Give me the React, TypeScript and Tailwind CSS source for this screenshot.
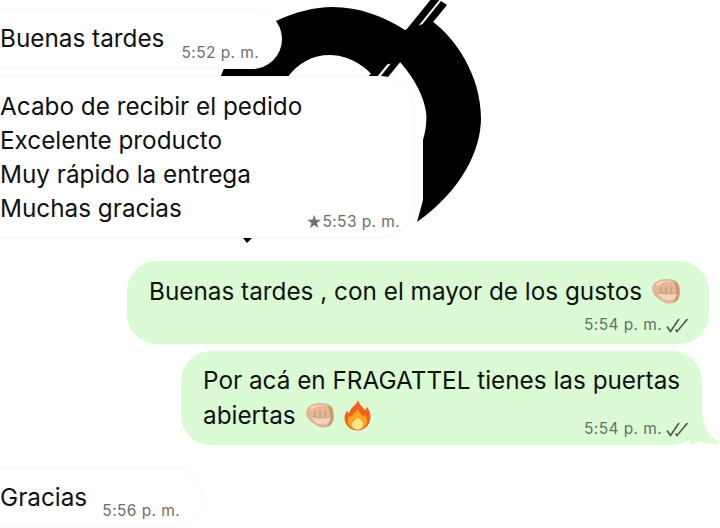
function Fist() {
  return (
    <svg width="30" height="26" viewBox="0 0 30 26" className="inline-block shrink-0">
      <path d="M2.500 6C5 2.500 10 1 16 1c6 0 10 1.500 11.500 4.500 1.500 3 2 9 1 13-1 4-4 6.500-8.500 7-4 .5-7-.5-9-2.500C7 21 2.500 18 1.500 13.500 1 10.500 1 8 2.500 6Z" fill="#e2b896" />
      <path d="M22 3c3.500 1 5.500 3 6 6 .6 4 .5 8-.5 10.500-1 2.500-3 4.500-6 5.300 3-3 4-6.800 3.500-12C24.700 9 24 5.500 22 3Z" fill="#d3966c" />
      <path d="M5 5.500C9 3 15 2.500 21 3.500c-5 0-10 1-13 3.500-2 1.500-3 .5-3-1.500Z" fill="#efd3bb" />
      <path d="M10 9.500v6M15 9v6.500M20 9v6" fill="none" stroke="#c08e6c" strokeWidth="1" strokeLinecap="round" />
      <path d="M7 14.500c5 1.800 12 2 19 .5-.3 3-2 5.500-5 7-4 1-8 .2-10.500-2C9 18.500 7.500 16.500 7 14.500Z" fill="#f0d3ba" />
      <path d="M7 14.500c5 1.800 12 2 19 .5" fill="none" stroke="#c79a78" strokeWidth=".8" />
    </svg>
  );
}

function Flame() {
  return (
    <svg width="27" height="32" viewBox="0 0 27 32" className="inline-block shrink-0">
      <path d="M14 1c1 4 4 6 7 10 1-1 1.500-2 1.500-3.500C25 10 26.500 14 26.500 18c0 8-6 13.500-13 13.500S.5 26 .5 19c0-3 1-5.500 3-7.500 0 1.500.5 2.500 1.500 3C6 9 12 6.500 14 1Z" fill="#f0641e" />
      <path d="M14 10c.5 3 3 5 5 7.500.5-.5 1-1 1-2 2 2 3 4 3 6 0 5-4 9-9.500 9S4 27 4 21.500c0-2 .5-3.500 2-5 0 1 .5 1.500 1 2C8 15 12 13.500 14 10Z" fill="#fba524" />
      <path d="M13.500 19c3 1 5.500 3.500 5.500 6.500 0 3-2.500 5-5.500 5S8 28.500 8 25.500c0-3 3-4 5.500-6.500Z" fill="#fde58a" />
    </svg>
  );
}

function Ticks() {
  return (
    <svg width="23" height="15" viewBox="0 0 23 15" fill="none" stroke="#4f5c4f" strokeWidth="1.700" className="shrink-0">
      <path d="M1 8.500l3.500 5L13 1" />
      <path d="M9.500 11.500l1.500 2L21.500 1" />
    </svg>
  );
}

function Time({ t, className = "text-[#6f6f6f]" }: { t: string; className?: string }) {
  return (
    <span className={`text-[15.500px] leading-5 tracking-[0.4px] whitespace-nowrap ${className}`}>
      {t} p. m.
    </span>
  );
}

export default function App() {
  return (
    <div
      className="relative h-[528px] w-[720px] overflow-hidden bg-white text-[24.300px] leading-[34px] text-[#111]"
      style={{ fontFamily: "Inter, 'Liberation Sans', sans-serif" }}
    >
      {/* black logo behind the chat */}
      <svg width="720" height="528" viewBox="0 0 720 528" className="absolute left-0 top-0">
        <path
          d="M220 78 L225 66 L270 40 L276 21 C295 12 315 7 332 7 C360 7 385 17 405 30 L432 21 C455 38 481 75 481 118 C481 150 462 190 417 222 L423 200 L423 140 C426 130 427 120 426 112 C424 98 416 80 400 62 L378 66 L373 76 C365 66 348 55 330 55 C312 55 298 63 287 78 Z"
          fill="#000"
        />
        <path d="M243 238h9l-5 5Z" fill="#000" />
        <path d="M368 77 L377 77 L441 -2 L432 -2 Z" fill="#000" />
        <path d="M380 77 L388 77 L447 5 L441 1 Z" fill="#000" />
      </svg>

      <div className="relative flex flex-col pt-[9px]">
        <div className="flex h-[60px] w-[282px] items-end justify-between rounded-r-[30px] border border-l-0 border-[#f7f7f7] bg-white pb-[5px] pr-[22px]">
          <span className="mb-[8px]">Buenas tardes</span>
          <Time t="5:52" />
        </div>

        <div className="mt-[7px] flex h-[162px] w-[415px] items-end justify-between rounded-r-[34px] border border-l-0 border-[#f7f7f7] bg-white pb-[5px] pr-[14px]">
          <div className="mb-[7px]">
            <div>Acabo de recibir el pedido</div>
            <div>Excelente producto</div>
            <div>Muy rápido la entrega</div>
            <div>Muchas gracias</div>
          </div>
          <span className="flex items-center text-[#6f6f6f]">
            <span className="text-[16px] leading-5">★</span>
            <Time t="5:53" />
          </span>
        </div>

        <div className="ml-[127px] mt-[23px] flex h-[83px] w-[582px] flex-col rounded-[30px] bg-[#dafbd3] pl-[22px] pr-[20px] pt-[13px]">
          <div className="flex items-center gap-[9px]">
            <span>Buenas tardes , con el mayor de los gustos</span>
            <Fist />
          </div>
          <div className="mt-[7px] flex items-center justify-end gap-[4px]">
            <Time t="5:54" className="text-[#5f755f]" />
            <Ticks />
          </div>
        </div>

        <div className="relative ml-[181px] mt-[7px] flex h-[94px] w-[521px] flex-col rounded-[30px] bg-[#dafbd3] pl-[22px] pr-[13px] pt-[12px]">
          <div className="mb-[1px]">Por acá en FRAGATTEL tienes las puertas</div>
          <div className="flex items-start justify-between">
            <div className="flex h-[34px] items-center gap-[9px]">
              <span>abiertas</span>
              <Fist />
              <Flame />
            </div>
            <div className="mt-[21px] flex items-center gap-[4px]">
              <Time t="5:54" className="text-[#5f755f]" />
              <Ticks />
            </div>
          </div>
          {/* bubble tail */}
          <svg width="30" height="30" viewBox="0 0 30 30" className="absolute -right-[18px] bottom-0">
            <path d="M12 0 C14 15 22 24 30 28 C24 30 16 29 10 26 L0 30 L0 0 Z" fill="#dafbd3" />
          </svg>
        </div>

        <div className="mt-[22px] flex h-[60px] w-[203px] items-end justify-between rounded-r-[30px] border border-l-0 border-[#f7f7f7] bg-white pb-[5px] pr-[22px]">
          <span className="mb-[7px]">Gracias</span>
          <Time t="5:56" />
        </div>
      </div>
    </div>
  );
}
